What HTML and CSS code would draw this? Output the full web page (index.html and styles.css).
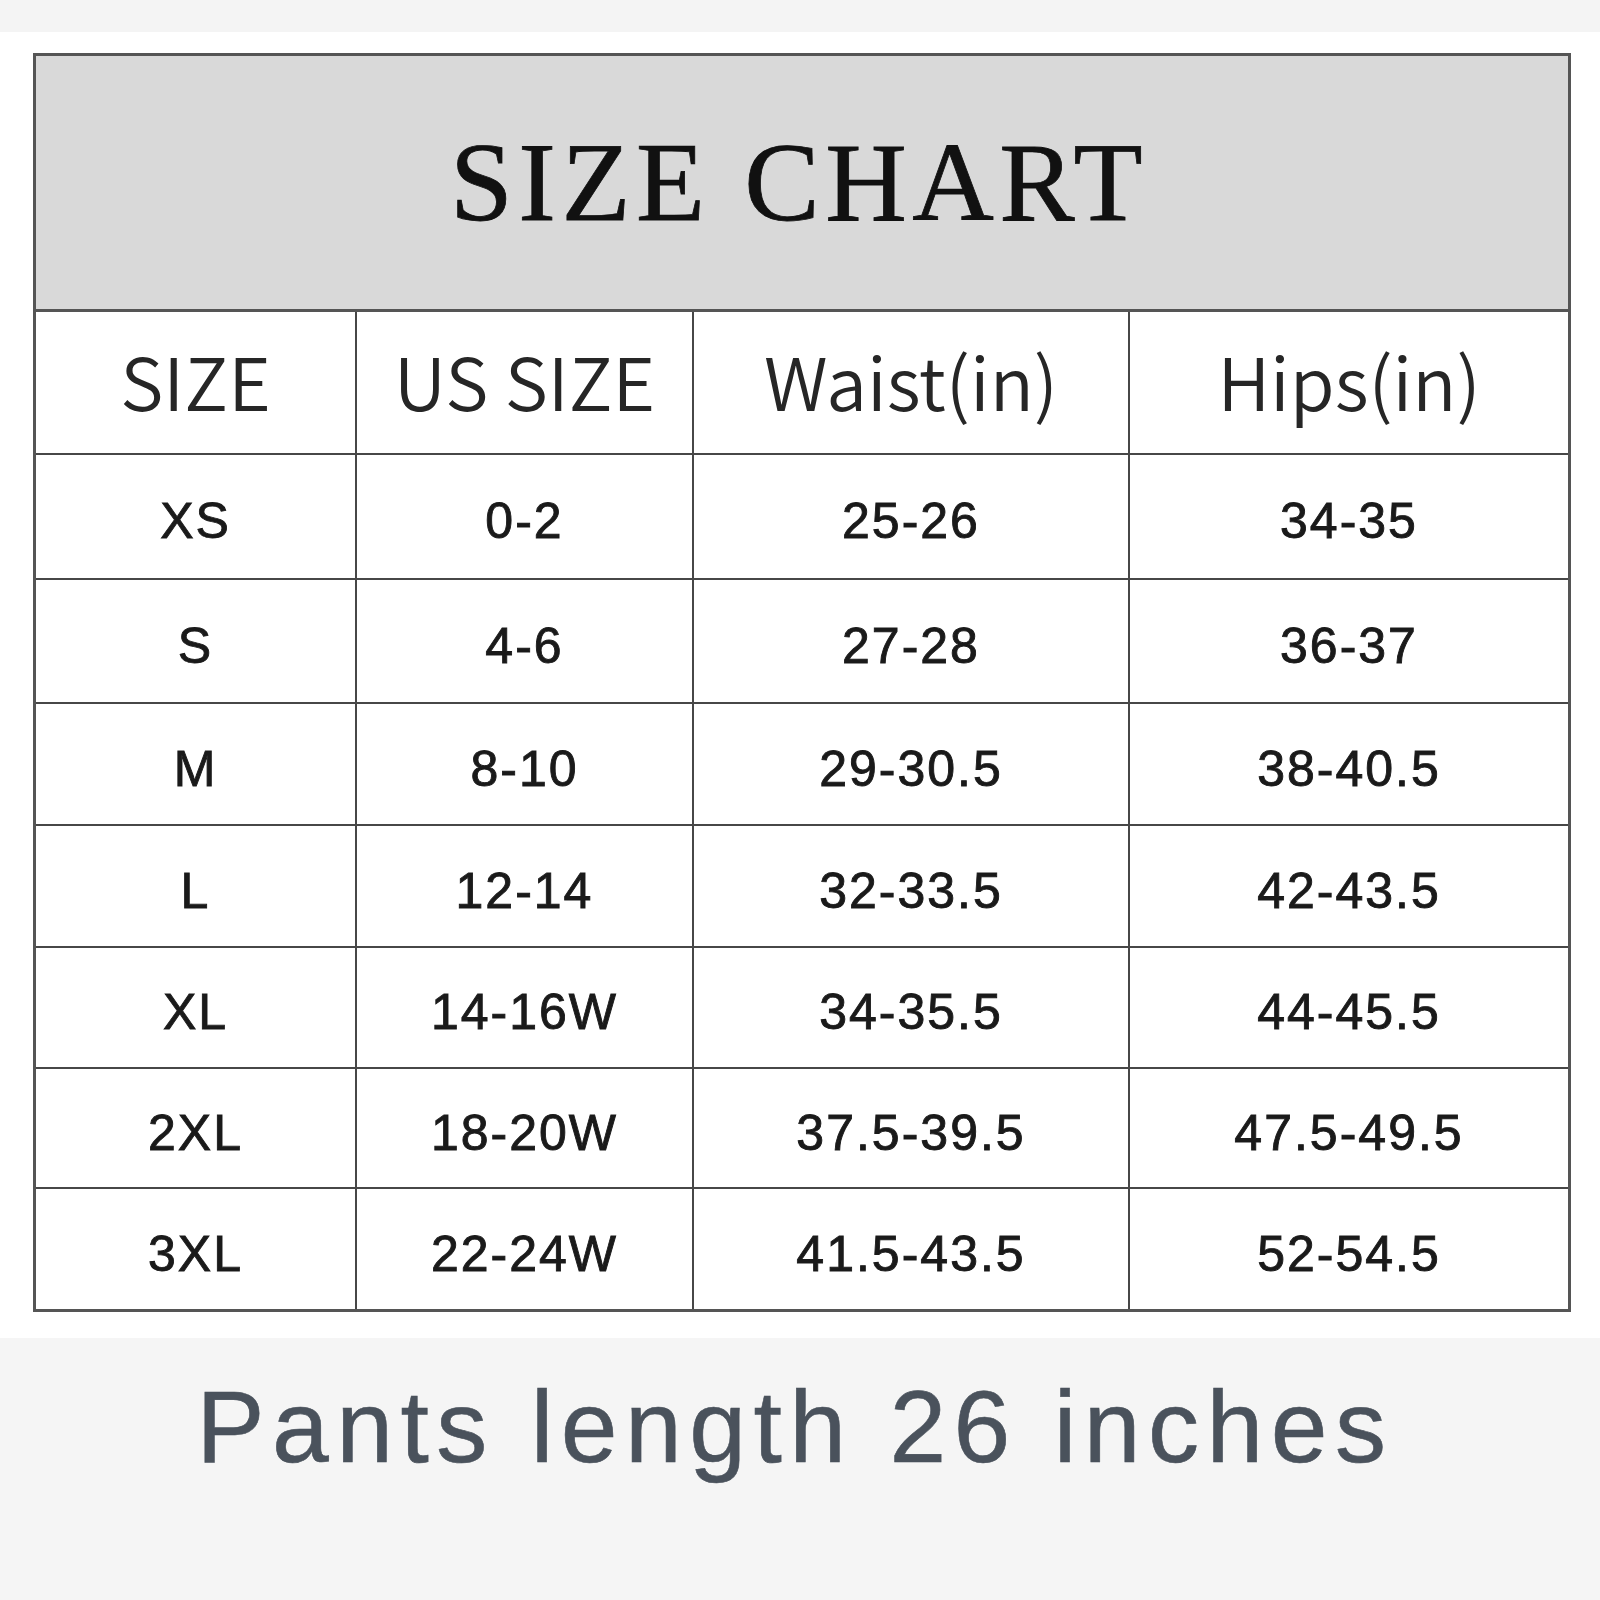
FILE: index.html
```html
<!DOCTYPE html>
<html lang="en">
<head>
<meta charset="utf-8">
<title>Size Chart</title>
<link rel="stylesheet" href="styles.css">
</head>
<body>
<div class="page">
  <div class="topband"></div>
  <div class="sheet">
    <div class="chart">
      <div class="title">SIZE CHART</div>
      <div class="grid">
        <div class="cell head">SIZE</div>
        <div class="cell head">US SIZE</div>
        <div class="cell head">Waist(in)</div>
        <div class="cell head last-col">Hips(in)</div>

        <div class="cell">XS</div>
        <div class="cell">0-2</div>
        <div class="cell">25-26</div>
        <div class="cell last-col">34-35</div>

        <div class="cell">S</div>
        <div class="cell">4-6</div>
        <div class="cell">27-28</div>
        <div class="cell last-col">36-37</div>

        <div class="cell">M</div>
        <div class="cell">8-10</div>
        <div class="cell">29-30.5</div>
        <div class="cell last-col">38-40.5</div>

        <div class="cell">L</div>
        <div class="cell">12-14</div>
        <div class="cell">32-33.5</div>
        <div class="cell last-col">42-43.5</div>

        <div class="cell">XL</div>
        <div class="cell">14-16W</div>
        <div class="cell">34-35.5</div>
        <div class="cell last-col">44-45.5</div>

        <div class="cell">2XL</div>
        <div class="cell">18-20W</div>
        <div class="cell">37.5-39.5</div>
        <div class="cell last-col">47.5-49.5</div>

        <div class="cell last-row">3XL</div>
        <div class="cell last-row">22-24W</div>
        <div class="cell last-row">41.5-43.5</div>
        <div class="cell last-row last-col">52-54.5</div>
      </div>
    </div>
  </div>
  <div class="footer">Pants length 26 inches</div>
</div>
</body>
</html>
```

FILE: styles.css
```css
* {
  box-sizing: border-box;
}

html, body {
  margin: 0;
  padding: 0;
  background: #ffffff;
}

.page {
  width: 1600px;
  height: 1600px;
  display: flex;
  flex-direction: column;
  background: #ffffff;
  overflow: hidden;
}

.topband {
  height: 32px;
  background: #f4f4f4;
}

.sheet {
  padding: 21px 0 26px 33px;
  background: #ffffff;
}

.chart {
  width: 1538px;
  border: 3px solid #555555;
  display: flex;
  flex-direction: column;
}

.title {
  height: 256px;
  background: #d9d9d9;
  border-bottom: 3px solid #555555;
  display: flex;
  align-items: center;
  justify-content: center;
  font-family: "Liberation Serif", "Times New Roman", serif;
  font-size: 113px;
  letter-spacing: 5.5px;
  line-height: 1;
  color: #111111;
  -webkit-text-stroke: 0.8px #111111;
  padding-bottom: 2px;
  padding-right: 6px;
}

.grid {
  display: grid;
  grid-template-columns: 321px 337px 436px 1fr;
  grid-template-rows: 143px 125px 124px 122px 122px 121px 120px 120px;
}

.cell {
  display: flex;
  align-items: center;
  justify-content: center;
  border-right: 2px solid #474747;
  border-bottom: 2px solid #474747;
  font-family: "Liberation Sans", Arial, sans-serif;
  font-size: 50px;
  letter-spacing: 2px;
  line-height: 1;
  color: #1a1a1a;
  -webkit-text-stroke: 0.9px #1a1a1a;
  padding-top: 9px;
}

.cell.head {
  font-family: "Noto Sans CJK SC", "Open Sans", sans-serif;
  font-weight: 350;
  font-size: 73px;
  letter-spacing: 0;
  color: #262626;
  -webkit-text-stroke: 0;
  padding-top: 0;
  padding-bottom: 6px;
}

.cell.last-col {
  border-right: none;
}

.cell.last-row {
  border-bottom: none;
}

.footer {
  flex: 1;
  background: #f5f5f5;
  padding-top: 38px;
  padding-right: 10px;
  text-align: center;
  font-family: "Liberation Sans", Arial, sans-serif;
  font-size: 102px;
  line-height: 1;
  letter-spacing: 7.5px;
  color: #4a525c;
  -webkit-text-stroke: 0.6px #4a525c;
}
```
